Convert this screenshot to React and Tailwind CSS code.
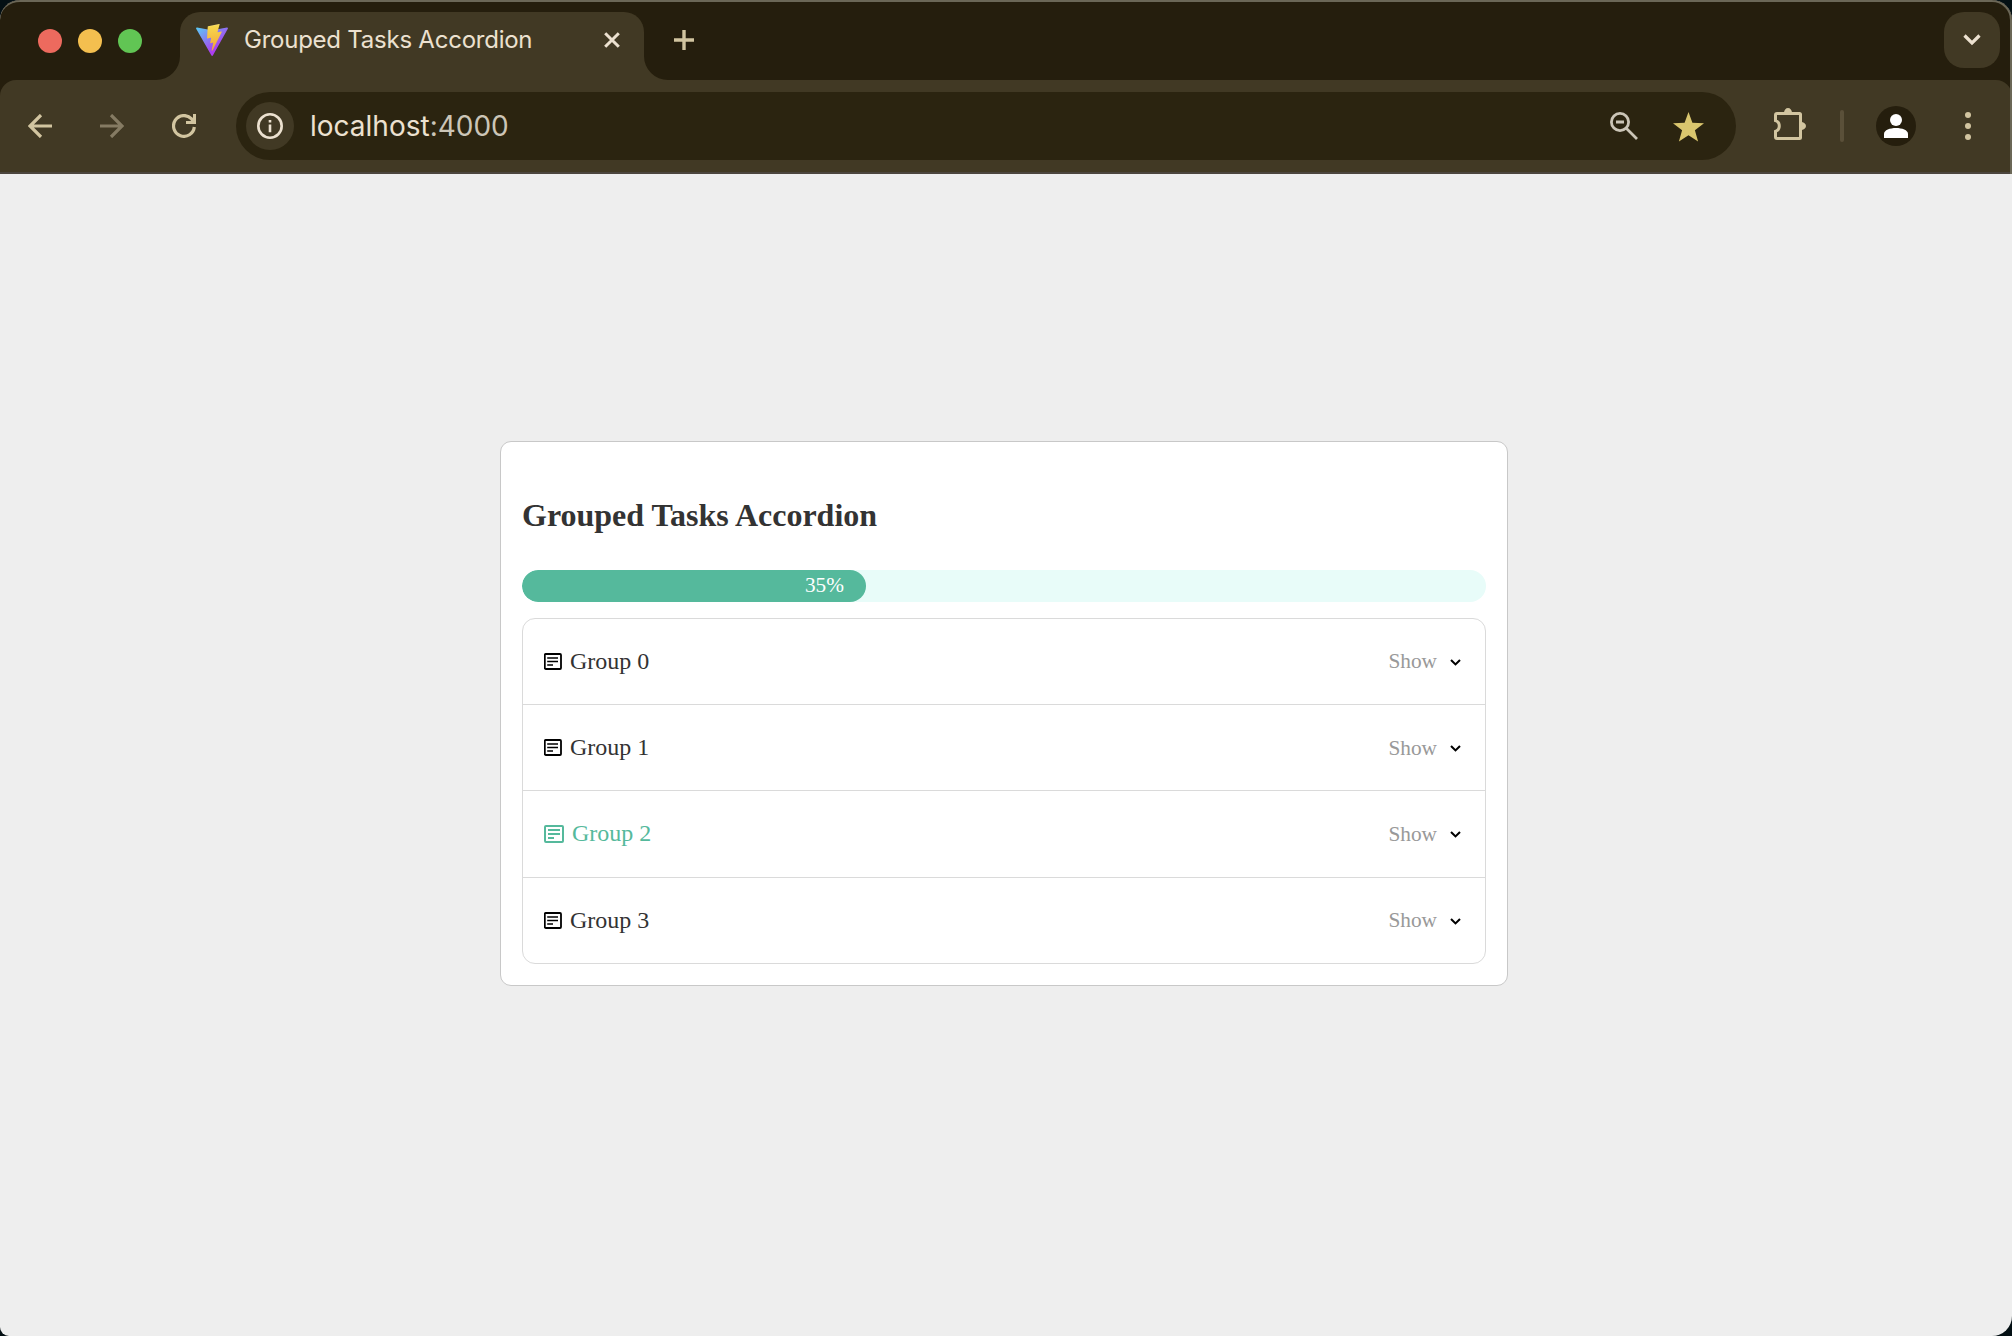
const Svg = ({ w, h = w, children, className = "" }) => (
  <svg width={w} height={h} viewBox={`0 0 ${w} ${h}`} fill="none" className={`block shrink-0 ${className}`}>
    {children}
  </svg>
);

const ViteLogo = () => (
  <svg width="32" height="32" viewBox="0 0 256 257" className="block shrink-0">
    <defs>
      <linearGradient id="va" x1="-.828%" x2="57.636%" y1="7.652%" y2="78.411%">
        <stop offset="0%" stopColor="#5cc6f5" />
        <stop offset="100%" stopColor="#ac3ef0" />
      </linearGradient>
      <linearGradient id="vb" x1="43.376%" x2="50.316%" y1="2.242%" y2="89.03%">
        <stop offset="0%" stopColor="#fbe27c" />
        <stop offset="8.333%" stopColor="#f7d74d" />
        <stop offset="100%" stopColor="#f2a93b" />
      </linearGradient>
    </defs>
    <path fill="url(#va)" d="M255.153 37.938L134.897 252.976c-2.483 4.44-8.862 4.466-11.382.048L.875 37.958c-2.746-4.814 1.371-10.646 6.827-9.67l120.385 21.517a6.537 6.537 0 0 0 2.322-.004l117.867-21.483c5.438-.991 9.574 4.796 6.877 9.62Z" />
    <path fill="url(#vb)" d="M185.432.063L96.44 17.501a3.268 3.268 0 0 0-2.634 3.014l-5.474 92.456a3.268 3.268 0 0 0 3.997 3.378l24.777-5.718c2.318-.535 4.413 1.507 3.936 3.838l-7.361 36.047c-.495 2.426 1.782 4.5 4.151 3.78l15.304-4.649c2.372-.72 4.652 1.36 4.15 3.788l-11.698 56.621c-.732 3.542 3.979 5.473 5.943 2.437l1.313-2.028l72.516-144.72c1.215-2.423-.88-5.186-3.54-4.672l-25.505 4.922c-2.396.462-4.435-1.77-3.759-4.114l16.646-57.705c.677-2.35-1.37-4.583-3.769-4.113Z" />
  </svg>
);

const TabStrip = () => (
  <div className="flex h-20 items-end bg-[#251e0d]">
    <div className="flex h-[78px] w-[156px] items-center gap-4 pl-[38px]">
      <span className="size-6 rounded-full bg-[#ed6a5e]" />
      <span className="size-6 rounded-full bg-[#f4bf4f]" />
      <span className="size-6 rounded-full bg-[#61c554]" />
    </div>
    <Svg w={24} className="text-[#413924]">
      <path d="M24 0V24H0A24 24 0 0 0 24 0Z" fill="currentColor" />
    </Svg>
    <div className="flex h-[68px] w-[464px] items-start rounded-t-[20px] bg-[#413924] pl-4 pt-3">
      <ViteLogo />
      <span className="ml-4 h-8 w-[340px] whitespace-nowrap font-['Inter'] text-[24px] leading-[31px] tracking-[-0.24px] text-[#ece1d0]">
        Grouped Tasks Accordion
      </span>
      <Svg w={16} className="mt-2 ml-5">
        <path d="M1.2 1.2L14.8 14.8M14.8 1.2L1.2 14.8" stroke="#ece1d0" strokeWidth="3" />
      </Svg>
    </div>
    <Svg w={24} className="text-[#413924]">
      <path d="M0 0V24H24A24 24 0 0 1 0 0Z" fill="currentColor" />
    </Svg>
    <Svg w={20} className="mb-[30px] ml-[6px]">
      <path d="M10 0V20M0 10H20" stroke="#d2c5a0" strokeWidth="3.4" />
    </Svg>
    <div className="mr-3 mb-3 ml-auto flex size-14 items-center justify-center rounded-[20px] bg-[#413924]">
      <Svg w={18} h={12}>
        <path d="M1.5 1.5L9 9L16.5 1.5" stroke="#ece1d0" strokeWidth="3.2" />
      </Svg>
    </div>
  </div>
);

const Toolbar = () => (
  <div className="bg-[#251e0d]">
    <div className="flex h-[94px] items-center rounded-t-[16px] border-b-2 border-[#4b453e] bg-[#413924]">
      <div className="flex w-[236px] items-center gap-12 pl-7">
        <Svg w={24}>
          <path d="M24 12H2M13 1L2 12L13 23" stroke="#d2c5a0" strokeWidth="3.2" />
        </Svg>
        <Svg w={24}>
          <path d="M0 12H22M11 1L22 12L11 23" stroke="#857b63" strokeWidth="3.2" />
        </Svg>
        <Svg w={24}>
          <path d="M22.3 13A10.4 10.4 0 1 1 19.6 4.9L22 8" stroke="#d2c5a0" strokeWidth="3.2" />
          <path d="M22.5 0V8.5H14" stroke="#d2c5a0" strokeWidth="3" />
        </Svg>
      </div>
      <div className="flex h-[68px] w-[1500px] items-center rounded-full bg-[#2b2410] pl-[10px]">
        <div className="flex size-12 items-center justify-center rounded-full bg-[#413924]">
          <Svg w={26}>
            <circle cx="13" cy="13" r="11.7" stroke="#ece1d0" strokeWidth="2.6" />
            <path d="M13 11.5V19.3M13 7V9.6" stroke="#ece1d0" strokeWidth="2.6" />
          </Svg>
        </div>
        <span className="ml-4 whitespace-nowrap font-['Inter'] text-[28px] leading-8 text-[#ece1d0]">
          localhost<span className="text-[#cbc5b7]">:4000</span>
        </span>
        <div className="mr-8 ml-auto flex items-center gap-[35px]">
          <Svg w={28}>
            <circle cx="10" cy="10" r="8.6" stroke="#cbc5b7" strokeWidth="2.8" />
            <path d="M6 10H14M16 16L27 27" stroke="#cbc5b7" strokeWidth="2.8" />
          </Svg>
          <Svg w={31} h={30} className="mt-[2px]">
            <path d="M15.5 0L19.4 10.8L31 11.2L21.9 18.3L25.1 29.6L15.5 23.2L5.9 29.6L9.1 18.3L0 11.2L11.6 10.8Z" fill="#dac66e" />
          </Svg>
        </div>
      </div>
      <Svg w={32} className="-mt-1 ml-[38px]">
        <path d="M3 5.5H25.5Q26.5 5.5 26.5 6.5V29.5Q26.5 30.5 25.5 30.5H3Q1.5 30.5 1.5 29V23.3A5.6 5.6 0 0 0 1.5 12.7V7Q1.5 5.5 3 5.5Z" stroke="#d2c5a0" strokeWidth="3" />
        <path d="M10 5A4 5 0 0 1 18 5ZM27 14A5 4 0 0 1 27 22Z" fill="#d2c5a0" />
      </Svg>
      <span className="ml-[34px] h-8 w-1 rounded-full bg-[#5a5039]" />
      <div className="ml-8 flex size-10 items-center justify-center rounded-full bg-[#251e0d]">
        <Svg w={24}>
          <circle cx="12" cy="6" r="6" fill="#fff" />
          <path d="M0 24V20C0 16 6 14 12 14S24 16 24 20V24Z" fill="#fff" />
        </Svg>
      </div>
      <Svg w={6} h={28} className="ml-[49px]">
        <circle cx="3" cy="3" r="3" fill="#d2c5a0" />
        <circle cx="3" cy="14" r="3" fill="#d2c5a0" />
        <circle cx="3" cy="25" r="3" fill="#d2c5a0" />
      </Svg>
    </div>
  </div>
);

const GroupIcon = ({ active }) =>
  active ? (
    <Svg w={20} h={18}>
      <rect x="1" y="1" width="18" height="16" rx="1" stroke="#55b99c" strokeWidth="2" />
      <path d="M4 5H16M4 9H16M4 13H10" stroke="#55b99c" strokeWidth="2" />
    </Svg>
  ) : (
    <Svg w={18} h={17}>
      <rect x="0.8" y="1" width="16.2" height="15" rx="1" stroke="#000" strokeWidth="1.8" />
      <path d="M3.2 5H14M3.2 8.5H14M3.2 12H9" stroke="#000" strokeWidth="1.7" />
    </Svg>
  );

const groups = [
  { name: "Group 0", height: "h-[86px]", showOffset: "mb-[2px]" },
  { name: "Group 1", height: "h-[86px]", showOffset: "" },
  { name: "Group 2", height: "h-[87px]", showOffset: "", active: true },
  { name: "Group 3", height: "h-[85px]", showOffset: "mb-[2px]" },
];

const GroupRow = ({ name, height, showOffset, active }) => (
  <li className={`flex items-center border-b border-[#dadada] pr-6 pl-[21px] last:border-b-0 ${height}`}>
    <GroupIcon active={active} />
    <span className={`mb-[2px] ml-2 text-[24px] leading-7 ${active ? "text-[#55b99c]" : "text-[#333]"}`}>{name}</span>
    <span className={`mr-[14px] ml-auto text-[21.3px] leading-6 text-[#999] ${showOffset}`}>Show</span>
    <Svg w={11} h={7} className="mt-px -ml-px">
      <path d="M1 1.1L5.5 5.4L10 1.1" stroke="#000" strokeWidth="2.1" />
    </Svg>
  </li>
);

export default function App() {
  return (
    <div className="h-[1336px] w-[2012px] overflow-hidden bg-[#041014]">
      <div className="relative flex h-[1336px] w-[2012px] flex-col overflow-hidden rounded-t-[20px] rounded-br-[20px] rounded-bl-[9px] bg-[#eee]">
        <TabStrip />
        <Toolbar />
        <main className="flex-1 pt-[267px] pl-[500px] font-['Liberation_Serif']">
          <section className="h-[545px] w-[1008px] rounded-[11px] border border-[#c8c8c8] bg-white px-[21px]">
            <h2 className="pt-[53px] text-[32px] leading-10 font-bold text-[#333]">Grouped Tasks Accordion</h2>
            <div className="mt-[35px] h-8 w-[964px] overflow-hidden rounded-full bg-[#e8fcf9]">
              <div className="flex h-8 w-[344px] items-start justify-end rounded-full bg-[#55b99c] pr-[22px] text-[21.3px] leading-[30px] text-white">
                35%
              </div>
            </div>
            <ul className="mt-4 h-[346px] w-[964px] rounded-[13px] border border-[#dadada]">
              {groups.map((g) => (
                <GroupRow key={g.name} {...g} />
              ))}
            </ul>
          </section>
        </main>
        <div className="pointer-events-none absolute inset-0 h-[174px] rounded-t-[20px] border-t-2 border-r-2 border-[#6b6757]" />
      </div>
    </div>
  );
}
